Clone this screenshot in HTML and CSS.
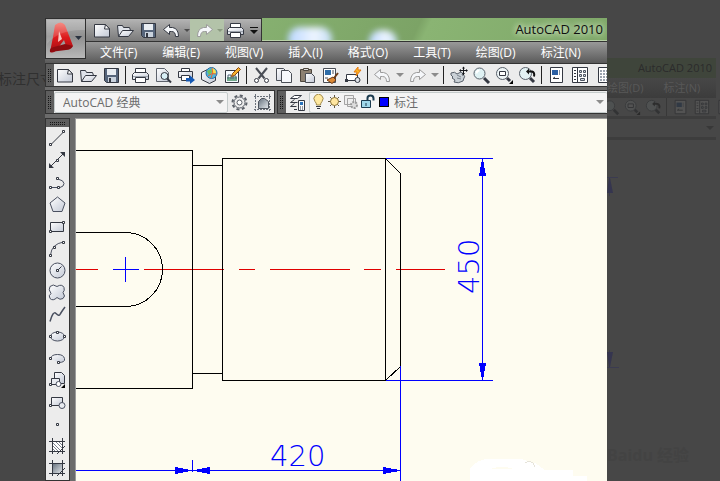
FILE: index.html
```
<!DOCTYPE html>
<html lang="zh-CN">
<head>
    <meta charset="UTF-8">
    <meta name="viewport" content="width=device-width, initial-scale=1.0">
    <title>AutoCAD 2010</title>
    <link rel="stylesheet" href="styles.css">
</head>
<body>
    <!-- icon set -->
    <svg class="defs" width="0" height="0" aria-hidden="true">
        <defs>
            <linearGradient id="paper" x1="0" y1="0" x2="1" y2="1">
                <stop offset="0" stop-color="#ffffff"/>
                <stop offset="1" stop-color="#c3c9d6"/>
            </linearGradient>
            <linearGradient id="steel" x1="0" y1="0" x2="1" y2="1">
                <stop offset="0" stop-color="#65707c"/>
                <stop offset="1" stop-color="#e6eaee"/>
            </linearGradient>
            <linearGradient id="red" x1="0" y1="0" x2="0" y2="1">
                <stop offset="0" stop-color="#f4776c"/>
                <stop offset="0.5" stop-color="#dc1a1c"/>
                <stop offset="1" stop-color="#a30d12"/>
            </linearGradient>
        </defs>
        <symbol id="new" viewBox="0 0 19 19">
            <path d="M1.5 3.5h11l4 4v8.5h-15z" fill="url(#paper)" stroke="#343842"/>
            <path d="M12.5 3.5l-1 4.5h5z" fill="#fff" stroke="#343842"/>
        </symbol>
        <symbol id="open" viewBox="0 0 19 19">
            <path d="M2.5 15.5l-1-11h5l1 2h6l1 3" fill="#dfe3ea" stroke="#343842"/>
            <path d="M2.5 15.5l4-6h11l-5 6z" fill="url(#paper)" stroke="#343842"/>
        </symbol>
        <symbol id="save" viewBox="0 0 19 19">
            <path d="M2.5 2.5h14v14h-12l-2-2z" fill="#56657b" stroke="#343842"/>
            <path d="M5 3h9v6h-9z" fill="#e9edf2"/>
            <path d="M6 11h8v5h-8z" fill="#c9d2dd"/>
            <path d="M7 12h2v4h-2z" fill="#343842"/>
        </symbol>
        <symbol id="print" viewBox="0 0 19 19">
            <path d="M4.500 7.500v-5h10v5" fill="#fff" stroke="#343842"/>
            <path d="M3.500 6.500h12l2 2v5h-16v-5z" fill="url(#paper)" stroke="#343842"/>
            <path d="M4.500 11.500h10v5h-10z" fill="#fff" stroke="#343842"/>
            <path d="M2 10.500h15" stroke="#9aa1ab"/>
        </symbol>
        <symbol id="preview" viewBox="0 0 19 19">
            <path d="M2.500 2.500h8l4 4v9h-12z" fill="url(#paper)" stroke="#5d626c"/>
            <circle cx="10.500" cy="10" r="3.500" fill="#d7eef5" stroke="#343842"/>
            <path d="M13 12.500l4 4" stroke="#343842" stroke-width="2"/>
        </symbol>
        <symbol id="plot" viewBox="0 0 19 19">
            <path d="M4.500 6v-3.500h8v3.500" fill="#fff" stroke="#343842"/>
            <path d="M1.500 5.500h14v6h-14z" fill="url(#paper)" stroke="#343842"/>
            <path d="M4.500 9.500h8v5h-8z" fill="#fff" stroke="#343842"/>
            <path d="M9 12h4v-2.500l5 4.500-5 4v-2.500h-4z" fill="#1559b5"/>
        </symbol>
        <symbol id="globe" viewBox="0 0 19 19">
            <path d="M1.500 6.500l6-3 8 3v8l-6 3-8-4z" fill="url(#paper)" stroke="#343842"/>
            <circle cx="11.500" cy="7" r="5.500" fill="#4bb7e0" stroke="#2f6ca0"/>
            <path d="M12 2q4 1 4 5l-4 1z" fill="#f4e04f"/>
            <path d="M7 5l4-2 1 3-3 3z" fill="#6fc05b"/>
            <path d="M8 10q4-4 8-2M12 2q2 5-1 10" fill="none" stroke="#e8692b"/>
        </symbol>
        <symbol id="sheet" viewBox="0 0 19 19">
            <path d="M2.500 4.500h13v12h-13z" fill="#f7fbff" stroke="#343842"/>
            <path d="M4 11h10v4h-10z" fill="#72a98c"/>
            <path d="M5 13v-4h3v4M10 13v-3h3v3" fill="none" stroke="#4d6277"/>
            <path d="M8.500 10.500l1-3 6-6 2 2-6 6z" fill="#f6b12e" stroke="#8a4a12"/>
        </symbol>
        <symbol id="cut" viewBox="0 0 19 19">
            <path d="M4 2l8.500 10.500M15 2l-8.500 10.500" stroke="#4a4e56" stroke-width="2" fill="none"/>
            <circle cx="4.500" cy="14.500" r="2" fill="#fff" stroke="#343842"/>
            <circle cx="14.500" cy="14.500" r="2" fill="#fff" stroke="#343842"/>
        </symbol>
        <symbol id="copy" viewBox="0 0 19 19">
            <path d="M1.500 2.500h7l3 3v9h-10z" fill="url(#paper)" stroke="#4a4e56"/>
            <path d="M6.500 4.500h7l3 3v9h-10z" fill="#f6f8fb" stroke="#4a4e56"/>
        </symbol>
        <symbol id="paste" viewBox="0 0 19 19">
            <path d="M2.500 3.500h11v12h-11z" fill="#8d8172" stroke="#4d463d"/>
            <path d="M5.500 2.500h5v2h-5z" fill="#ddd" stroke="#4d463d"/>
            <path d="M7.500 7.500h6l3 3v6h-9z" fill="url(#paper)" stroke="#4a4e56"/>
        </symbol>
        <symbol id="match" viewBox="0 0 19 19">
            <path d="M2.500 2.500h12v14h-12z" fill="#fff" stroke="#4a4e56"/>
            <path d="M4 4h6v5h-6z" fill="#2f6da8"/>
            <path d="M11 5h2M11 7h2M4 12h3" stroke="#4a4e56"/>
            <path d="M17 7l-4 5" stroke="#6b3a16" stroke-width="2"/>
            <path d="M6 14l6-3 3 3-4 3.500z" fill="#dd8a35" stroke="#6b3a16"/>
        </symbol>
        <symbol id="block" viewBox="0 0 19 19">
            <path d="M2.500 8.500h11v6h-11z" fill="#fff" stroke="#343842"/>
            <circle cx="13.500" cy="14" r="2.500" fill="#dde1e7" stroke="#343842"/>
            <path d="M1 13h3v3h-3z" fill="#343842"/>
            <path d="M14 1l-4 5h3l-1 4 5-6h-3z" fill="#ffb521" stroke="#e47a10"/>
        </symbol>
        <symbol id="undo" viewBox="0 0 19 19">
            <path d="M1.500 8.500l6-5v3h3q6 1 6 9h-3q0-5-4-5h-2v3z" fill="#f5f7fa" stroke="currentColor"/>
        </symbol>
        <symbol id="redo" viewBox="0 0 19 19">
            <path d="M17.500 8.500l-6-5v3h-3q-6 1-6 9h3q0-5 4-5h2v3z" fill="#f5f7fa" stroke="currentColor"/>
        </symbol>
        <symbol id="pan" viewBox="0 0 19 19">
            <path d="M2 7q4-2 6 1l4-2q3 1 1 3 4 0 2 3l-1 3q-5 3-9 1l1-2-3-2 1-1-2-2z" fill="#c9d0d6" stroke="#59616b"/>
            <path d="M8 9l4 2M8 12l4 1" stroke="#7b848e"/>
            <path d="M14.500 1v8M11 4.500h7" stroke="#16181c"/>
            <path d="M13 2.500l1.500-2 1.500 2zM13 7l1.500 2 1.500-2zM12 3l-2 1.500 2 1.500zM17 3l2 1.500-2 1.500z" fill="#16181c"/>
        </symbol>
        <symbol id="lens" viewBox="0 0 19 19">
            <circle cx="7.500" cy="7.500" r="5.500" fill="#dff1f3" stroke="#59616b"/>
            <path d="M12 12l5 5" stroke="#343842" stroke-width="3"/>
            <path d="M4.500 7.500q0-3 3-3" fill="none" stroke="#fff" stroke-width="2"/>
        </symbol>
        <symbol id="lens-win" viewBox="0 0 19 19">
            <circle cx="7.500" cy="7.500" r="6" fill="#eef5f6" stroke="#59616b"/>
            <path d="M4.500 5.500h6v4h-6z" fill="#fff" stroke="#343842"/>
            <path d="M12 12l3 3" stroke="#343842" stroke-width="3"/>
            <path d="M18 14v4h-4z" fill="#000"/>
        </symbol>
        <symbol id="lens-back" viewBox="0 0 19 19">
            <circle cx="7.500" cy="7.500" r="6" fill="#e3f1f3" stroke="#59616b"/>
            <path d="M12 12l4 4" stroke="#343842" stroke-width="3"/>
            <path d="M10 5.500h4q3 1 2 5" fill="none" stroke="#111" stroke-width="2"/>
            <path d="M8 5.500l3-3v6z" fill="#111"/>
        </symbol>
        <symbol id="props" viewBox="0 0 19 19">
            <path d="M3.500 1.500h12v15h-12z" fill="#fff" stroke="#343842"/>
            <path d="M5 4h6v5h-6z" fill="#2b5fa3"/>
            <path d="M12.500 4v5" stroke="#8a93a0"/>
            <path d="M6 12.500h6M6 12.500l2-1.500" stroke="#343842"/>
        </symbol>
        <symbol id="palette" viewBox="0 0 19 19">
            <path d="M2.500 1.500h15v15h-15z" fill="#fff" stroke="#343842"/>
            <path d="M7.500 2v14" stroke="#343842"/>
            <path d="M4 4.500h2M4 7.500h2M4 10.500h2M4 13.500h2" stroke="#343842"/>
            <path d="M9.500 4.500h2v2h-2zM13.500 4.500h2v2h-2zM9.500 8.500h2v2h-2zM13.500 8.500h2v2h-2zM10.500 12.500h4v2h-4z" fill="#d5dae1" stroke="#4c5461"/>
        </symbol>
        <symbol id="sheets" viewBox="0 0 19 19">
            <path d="M5.500 1.500h12v15h-12z" fill="#fff" stroke="#343842"/>
            <path d="M7 5h10M7 8h10M7 11h10M7 14h10" stroke="#9ba3ae" stroke-width="2" stroke-dasharray="2 1"/>
        </symbol>
        <symbol id="gear" viewBox="0 0 19 19">
            <circle cx="9.500" cy="9.500" r="7" fill="none" stroke="#5b6068" stroke-width="2" stroke-dasharray="3 2.500"/>
            <circle cx="9.500" cy="9.500" r="5.500" fill="#ececec" stroke="#5b6068"/>
            <circle cx="9.500" cy="9.500" r="2.500" fill="#fff" stroke="#5b6068"/>
        </symbol>
        <symbol id="house" viewBox="0 0 19 19">
            <path d="M2.500 1v17M16.500 1v17M1 3.500h17M1 16.500h17" stroke="#6c727b" stroke-dasharray="2 1"/>
            <path d="M5.500 15.500v-7l3-3h3l4 3v7z" fill="url(#steel)" stroke="#4d535c"/>
        </symbol>
        <symbol id="layers" viewBox="0 0 19 19">
            <path d="M2.500 5.500l4-3h7l-4 3zM2.500 9.500l4-3M2.500 9.500h7M2.500 13.500l4-3M2.500 13.500h6M6 16.500h3" fill="#fff" stroke="#343842"/>
            <path d="M10.500 7.500h6v10h-6z" fill="#f5f8fb" stroke="#343842"/>
            <path d="M12 9h3v3h-3z" fill="#2872ba"/>
            <path d="M12 14h1M14 14h1M12 16h1M14 16h1" stroke="#343842"/>
        </symbol>
        <symbol id="bulb" viewBox="0 0 16 16">
            <path d="M5.500 11q0-2-1.500-3.500a4.500 4.500 0 1 1 7 0q-1.500 1.500-1.500 3.500z" fill="#ffe9a0" stroke="#a18a4c"/>
            <path d="M5 12.500h5M6 14.500h3" stroke="#343842"/>
        </symbol>
        <symbol id="sun" viewBox="0 0 16 16">
            <path d="M7.500 1v13M1 7.500h13M3 3l9 9M12 3l-9 9" stroke="#5d5646"/>
            <circle cx="7.500" cy="7.500" r="4" fill="#ffe6a0" stroke="#8a7337"/>
        </symbol>
        <symbol id="freeze" viewBox="0 0 16 16">
            <path d="M1.500 1.500h9v9h-9zM4.500 4.500h8v8h-8z" fill="#eee" stroke="#a3a3a3"/>
            <circle cx="11" cy="11" r="3" fill="#ddd" stroke="#9b9b9b" stroke-width="2" stroke-dasharray="2 1"/>
        </symbol>
        <symbol id="lock" viewBox="0 0 16 16">
            <path d="M8.500 7v-3q0-2.500 3-2.500t3 3v2" fill="none" stroke="#1c3c50" stroke-width="2"/>
            <path d="M2.500 6.500h9v7h-9z" fill="#9fd7ea" stroke="#1c3c50"/>
            <path d="M7 9v3" stroke="#1c3c50"/>
        </symbol>
        <symbol id="t-line" viewBox="0 0 19 19">
            <path d="M3 15.500L15.500 3" stroke="#343842"/>
            <path d="M1.500 14.500h2v2h-2zM14.500 1.500h2v2h-2z" fill="#fff" stroke="#343842"/>
        </symbol>
        <symbol id="t-xline" viewBox="0 0 19 19">
            <path d="M3 15L15 3" stroke="#343842"/>
            <path d="M1 17v-5l5 5zM17 1v5l-5-5z" fill="#343842"/>
            <path d="M8.500 8.500h2v2h-2z" fill="#fff" stroke="#343842"/>
        </symbol>
        <symbol id="t-pline" viewBox="0 0 19 19">
            <path d="M3 14.500h9q4-1 4-4t-6-4.500" fill="none" stroke="#4a5060"/>
            <path d="M1.500 13.500h2v2h-2zM9.500 13.500h2v2h-2zM8.500 4.500h2v2h-2z" fill="#fff" stroke="#343842"/>
        </symbol>
        <symbol id="t-poly" viewBox="0 0 19 19">
            <path d="M9.500 2l7.500 6-3 8.500h-9l-3-8.500z" fill="url(#paper)" stroke="#4a5060"/>
        </symbol>
        <symbol id="t-rect" viewBox="0 0 19 19">
            <path d="M2.500 5.500h13v9h-13z" fill="url(#paper)" stroke="#343842"/>
            <path d="M1.500 13.500h2v2h-2zM14.500 4.500h2v2h-2z" fill="#fff" stroke="#343842"/>
        </symbol>
        <symbol id="t-arc" viewBox="0 0 19 19">
            <path d="M2.500 16q1-11 13-13" fill="none" stroke="#4a5060"/>
            <path d="M1.500 15.500h2v2h-2zM14.500 2.500h2v2h-2zM5.500 7.500h2v2h-2z" fill="#fff" stroke="#343842"/>
        </symbol>
        <symbol id="t-circle" viewBox="0 0 19 19">
            <circle cx="9.500" cy="9.500" r="7.500" fill="url(#paper)" stroke="#4a5060"/>
            <path d="M9.500 9.500l4-4" stroke="#343842"/>
            <path d="M8.500 8.500h2v2h-2z" fill="#fff" stroke="#343842"/>
        </symbol>
        <symbol id="t-cloud" viewBox="0 0 19 19">
            <path d="M9 3.500q5-3 7 1 1 3-1 5 3 4 0 6-3 2-6-1-4 4-7 1-2-3 1-5-3-4-1-7 3-3 7 0z" fill="url(#paper)" stroke="#4a5060"/>
        </symbol>
        <symbol id="t-spline" viewBox="0 0 19 19">
            <path d="M2 16.500q3-11 6-8t4 1 5-7.500" fill="none" stroke="#4a5060" stroke-width="1.500"/>
        </symbol>
        <symbol id="t-ellipse" viewBox="0 0 19 19">
            <ellipse cx="9.500" cy="9.500" rx="7" ry="4.500" fill="url(#paper)" stroke="#4a5060"/>
            <path d="M1.500 8.500h2v2h-2zM15.500 8.500h2v2h-2zM8.500 4.500h2v2h-2z" fill="#fff" stroke="#343842"/>
        </symbol>
        <symbol id="t-earc" viewBox="0 0 19 19">
            <path d="M2.500 9.500q1-4 7-4t7 4-6 4" fill="url(#paper)" stroke="#4a5060"/>
            <path d="M1.500 8.500h2v2h-2zM9.500 12.500h2v2h-2z" fill="#fff" stroke="#343842"/>
        </symbol>
        <symbol id="t-insert" viewBox="0 0 19 19">
            <path d="M6.500 1.500h7l3 3v8h-10z" fill="url(#paper)" stroke="#343842"/>
            <path d="M3.500 7.500h8v6h-8z" fill="#e8ebf0" stroke="#343842"/>
            <circle cx="10.500" cy="13" r="2.500" fill="#fff" stroke="#4a5060"/>
            <path d="M1.500 12.500h2v2h-2z" fill="#fff" stroke="#343842"/>
            <path d="M17 13v4h-4z" fill="#000"/>
        </symbol>
        <symbol id="t-block" viewBox="0 0 19 19">
            <path d="M3.500 4.500h11v8h-11z" fill="url(#paper)" stroke="#343842"/>
            <circle cx="14" cy="12.500" r="3" fill="#e8ebf0" stroke="#4a5060"/>
            <path d="M1.500 11.500h2v2h-2z" fill="#fff" stroke="#343842"/>
        </symbol>
        <symbol id="t-point" viewBox="0 0 19 19">
            <path d="M8.500 8.500h2v2h-2z" fill="#fff" stroke="#343842"/>
        </symbol>
        <symbol id="t-hatch" viewBox="0 0 19 19">
            <path d="M4.500 4.500h10v10h-10z" fill="#fff"/>
            <path d="M4 8l7 7M4 11l4 4M4 5l10 10M7 4l8 8M10 4l5 5" stroke="#7b828e"/>
            <path d="M4.500 1v16M14.500 1v16M1 4.500h16M1 14.500h16M9 17l8-8" stroke="#343842"/>
        </symbol>
        <symbol id="t-grad" viewBox="0 0 19 19">
            <path d="M4.500 4.500h10v10h-10z" fill="url(#steel)"/>
            <path d="M4.500 1v16M14.500 1v16M1 4.500h16M1 14.500h16M9 17l8-8" stroke="#343842"/>
        </symbol>
    </svg>

    <div class="page">
        <div class="page-left">标注尺寸</div>

        <div class="window">
            <header class="header">
                <button class="app-button" aria-label="菜单">
                    <svg width="40" height="40" viewBox="0 0 40 40">
                        <path d="M9 6q6-5 10 0l8 21q-4 2-7 0l-2-6-6 8q-4 6-8 4 3-14 5-27z" fill="url(#red)"/>
                        <path d="M13 12l3 8-4 3z" fill="#f9c7c0"/>
                        <path d="M4 33q-1-4 4-5l11-3 8 2q-2 4-7 4-8 1-16 2z" fill="#8d0c10"/>
                        <path d="M1 25q12-15 38-14v-10h-38z" fill="#fff" opacity="0.15"/>
                        <path d="M29 17h7l-3.500 4z" fill="#2b3340"/>
                    </svg>
                </button>
                <div class="titlebar">
                    <div class="quick">
                        <button class="tool"><svg><use href="#new"/></svg></button>
                        <button class="tool"><svg><use href="#open"/></svg></button>
                        <button class="tool"><svg><use href="#save"/></svg></button>
                        <button class="tool"><svg><use href="#undo"/></svg></button>
                        <span class="caret small"></span>
                        <div class="quick-hot">
                            <button class="tool"><svg><use href="#redo"/></svg></button>
                            <span class="caret small"></span>
                        </div>
                        <button class="tool"><svg><use href="#print"/></svg></button>
                        <button class="more" aria-label="更多"></button>
                    </div>
                    <div class="title">
                        <span class="blob"></span>
                        <span class="blob second"></span>
                        <span class="title-text">AutoCAD 2010</span>
                    </div>
                </div>
                <nav class="menu">
                    <a href="#">文件(F)</a>
                    <a href="#">编辑(E)</a>
                    <a href="#">视图(V)</a>
                    <a href="#">插入(I)</a>
                    <a href="#">格式(O)</a>
                    <a href="#">工具(T)</a>
                    <a href="#">绘图(D)</a>
                    <a href="#">标注(N)</a>
                </nav>
            </header>

            <div class="bar standard">
                <span class="grip"></span>
                <button class="tool"><svg><use href="#new"/></svg></button>
                <button class="tool"><svg><use href="#open"/></svg></button>
                <button class="tool"><svg><use href="#save"/></svg></button>
                <span class="sep"></span>
                <button class="tool"><svg><use href="#print"/></svg></button>
                <button class="tool"><svg><use href="#preview"/></svg></button>
                <button class="tool"><svg><use href="#plot"/></svg></button>
                <button class="tool"><svg><use href="#globe"/></svg></button>
                <button class="tool"><svg><use href="#sheet"/></svg></button>
                <span class="sep"></span>
                <button class="tool"><svg><use href="#cut"/></svg></button>
                <button class="tool"><svg><use href="#copy"/></svg></button>
                <button class="tool"><svg><use href="#paste"/></svg></button>
                <button class="tool"><svg><use href="#match"/></svg></button>
                <button class="tool"><svg><use href="#block"/></svg></button>
                <span class="sep"></span>
                <button class="tool off"><svg><use href="#undo"/></svg></button>
                <span class="caret"></span>
                <button class="tool off"><svg><use href="#redo"/></svg></button>
                <span class="caret"></span>
                <span class="sep"></span>
                <button class="tool"><svg><use href="#pan"/></svg></button>
                <button class="tool"><svg><use href="#lens"/></svg></button>
                <button class="tool"><svg><use href="#lens-win"/></svg></button>
                <button class="tool"><svg><use href="#lens-back"/></svg></button>
                <span class="sep"></span>
                <button class="tool"><svg><use href="#props"/></svg></button>
                <button class="tool"><svg><use href="#palette"/></svg></button>
                <button class="tool"><svg><use href="#sheets"/></svg></button>
            </div>

            <div class="bar-row">
                <div class="bar">
                    <span class="grip"></span>
                    <div class="combo workspace">
                        <select aria-label="工作空间">
                            <option>AutoCAD 经典</option>
                        </select>
                        <span class="caret"></span>
                    </div>
                    <button class="tool"><svg><use href="#gear"/></svg></button>
                    <button class="tool"><svg><use href="#house"/></svg></button>
                </div>
                <div class="bar layer-bar">
                    <span class="grip"></span>
                    <button class="tool"><svg><use href="#layers"/></svg></button>
                    <div class="combo layer">
                        <svg><use href="#bulb"/></svg>
                        <svg><use href="#sun"/></svg>
                        <svg><use href="#freeze"/></svg>
                        <svg><use href="#lock"/></svg>
                        <span class="swatch"></span>
                        <select aria-label="图层">
                            <option>标注</option>
                        </select>
                        <span class="caret"></span>
                    </div>
                </div>
            </div>

            <div class="work">
                <div class="tools">
                    <span class="grip flat"></span>
                    <button class="tool"><svg><use href="#t-line"/></svg></button>
                    <button class="tool"><svg><use href="#t-xline"/></svg></button>
                    <button class="tool"><svg><use href="#t-pline"/></svg></button>
                    <button class="tool"><svg><use href="#t-poly"/></svg></button>
                    <button class="tool"><svg><use href="#t-rect"/></svg></button>
                    <button class="tool"><svg><use href="#t-arc"/></svg></button>
                    <button class="tool"><svg><use href="#t-circle"/></svg></button>
                    <button class="tool"><svg><use href="#t-cloud"/></svg></button>
                    <button class="tool"><svg><use href="#t-spline"/></svg></button>
                    <button class="tool"><svg><use href="#t-ellipse"/></svg></button>
                    <button class="tool"><svg><use href="#t-earc"/></svg></button>
                    <button class="tool"><svg><use href="#t-insert"/></svg></button>
                    <button class="tool"><svg><use href="#t-block"/></svg></button>
                    <button class="tool"><svg><use href="#t-point"/></svg></button>
                    <button class="tool"><svg><use href="#t-hatch"/></svg></button>
                    <button class="tool"><svg><use href="#t-grad"/></svg></button>
                </div>
                <div class="canvas">
                    <svg class="drawing" viewBox="76 119 531 362" width="531" height="362">
                        <!-- white patch in the corner -->
                        <path d="M470 481v-12q6-9 17-10h34l14 4 10 7h28v6h14v5z" fill="#fff"/>
                        <path d="M490 469q12-4 24 0z" fill="#fefcf0"/>
                        <path d="M525 463q4-3 8 0l2 4" fill="none" stroke="#e6e4da"/>

                        <!-- centre line -->
                        <path class="centre" d="M76 269.500h22M144 269.500h80M239 269.500h16M270 269.500h80M364 269.500h17M396 269.500h49"/>

                        <!-- shaft -->
                        <g class="outline">
                            <path d="M76 150.500h116.500v238h-116.500"/>
                            <path d="M192.500 165.500h30M192.500 373.500h30"/>
                            <path d="M385.500 158.500h-163v222h163z"/>
                            <path d="M385.500 158.500l15 15v193l-15 14"/>
                            <path d="M76 232.500h49.500a37 37 0 0 1 0 74h-49.500"/>
                        </g>

                        <!-- dimensions -->
                        <g class="dim">
                            <path d="M125.500 257v25M113 269.500h26"/>
                            <path d="M386 158.500h107M386 380.500h107M482.500 158v222"/>
                            <path d="M400.500 366v115M192.500 460v12M76 470.500h325"/>
                        </g>
                        <g class="arrow">
                            <path d="M482 159h1l3 17h-7z"/>
                            <path d="M482 380h1l3-17h-7z"/>
                            <path d="M190 470v1l-15 3v-7z"/>
                            <path d="M194 470v1l16 3v-7z"/>
                            <path d="M400 470v1l-17 3v-7z"/>
                        </g>
                        <text class="dim-text" x="270" y="466">420</text>
                        <text class="dim-text" transform="translate(479 294) rotate(-90)">450</text>
                    </svg>
                </div>
            </div>
        </div>

        <div class="page-right">
            <div class="ghost-title">AutoCAD 2010</div>
            <div class="ghost-menu"><span>绘图(D)</span><span>标注(N)</span></div>
            <div class="ghost-tools">
                <svg><use href="#lens"/></svg>
                <svg><use href="#lens-win"/></svg>
                <svg><use href="#lens-back"/></svg>
                <span class="sep"></span>
                <svg><use href="#props"/></svg>
                <svg><use href="#palette"/></svg>
                <svg><use href="#sheets"/></svg>
            </div>
            <div class="ghost-combo"><span class="caret"></span></div>
            <svg class="ghost-drawing" width="110" height="200" viewBox="607 170 110 200">
                <path d="M607 177.500h11M607 367.500h12M609.500 178v18M609.500 350v17" stroke="#3b3b50" fill="none"/>
                <path d="M609 178h1l3 15h-6zM609 367h1l3-15h-6z" fill="#35354f"/>
            </svg>
            <div class="ghost-mark">Baidu 经验</div>
        </div>
    </div>
</body>
</html>
```
FILE: styles.css
```
*, *::before, *::after{
    box-sizing: border-box;
}
body{
    margin: 0;
    background-color: #474747;
    font-family: "Open Sans", "Noto Sans CJK SC", sans-serif;
    font-size: 12px;
    overflow: hidden;
}
.defs{
    position: absolute;
}
.page{
    display: grid;
    grid-template-columns: 45px minmax(0, 1fr) 113px;
    height: 100vh;
}
.page-left{
    margin-left: -2px;
    padding-top: 69px;
    font-size: 14px;
    line-height: 20px;
    color: #303030;
    white-space: nowrap;
    overflow: hidden;
}
.window{
    display: flex;
    flex-direction: column;
    min-height: 0;
    margin-top: 18px;
    background-color: #6b6b6b;
    overflow: hidden;
}

/* header */
.header{
    display: grid;
    grid-template-columns: 41px minmax(0, 1fr);
    grid-template-rows: 24px 21px;
}
.app-button{
    grid-area: 1 / 1 / 3 / 2;
    align-self: start;
    z-index: 1;
    height: 41px;
    padding: 0;
    border: 1px solid #2f2f2f;
    background: linear-gradient(#b4b4b4, #8f8f8f 45%, #b9b9b9);
    overflow: hidden;
}
.app-button svg{
    display: block;
}
.titlebar{
    grid-area: 1 / 2;
    display: flex;
    border-bottom: 1px solid #333;
}
.quick{
    display: flex;
    align-items: center;
    padding-left: 5px;
    background: linear-gradient(#b4b4b4, #7a7a7a);
    border: solid #333;
    border-width: 1px 1px 0 0;
}
.quick .tool{
    height: 22px;
}
.quick-hot{
    display: flex;
    align-items: center;
    width: 34px;
    padding-left: 3px;
    background-color: #b3c3a9;
}
.more{
    width: 14px;
    height: 22px;
    padding: 0;
    border: 0;
    background: none;
}
.more::before{
    content: "";
    display: block;
    width: 8px;
    margin: 0 auto;
    border-top: 1px solid #111;
}
.more::after{
    content: "";
    display: block;
    width: 8px;
    margin: 2px auto 0;
    border: 4px solid transparent;
    border-top-color: #111;
    border-bottom: 0;
}
.title{
    position: relative;
    flex: 1;
    padding-right: 4px;
    background: linear-gradient(115deg, #86b070, #7ca366 45%, #8ab473 48%, #7fa869);
    border-bottom: 1px solid #b7d1a6;
    line-height: 22px;
    text-align: right;
    overflow: hidden;
}
.blob{
    position: absolute;
    left: 26px;
    top: 9px;
    width: 44px;
    height: 24px;
    border-radius: 12px;
    background: linear-gradient(90deg, #b9d6ff, #eef5ff 60%, #c2dcf4);
    filter: blur(3px);
}
.blob.second{
    left: 107px;
    top: 12px;
    width: 28px;
}
.title-text{
    position: relative;
    font-size: 13px;
    color: #101010;
    text-shadow: 0 0 6px #dcebd2, 0 0 6px #dcebd2;
}
.menu{
    grid-area: 2 / 1 / 3 / 3;
    display: flex;
    gap: 25px;
    padding-left: 55px;
    background: linear-gradient(#999, #5a5a5a);
}
.menu a{
    color: #fff;
    line-height: 21px;
    text-decoration: none;
    white-space: nowrap;
}

/* toolbars */
.bar{
    display: flex;
    align-items: center;
    height: 24px;
    border: 1px solid #333;
    background-color: #ececec;
}
.standard{
    flex: none;
    border-right: 0;
    overflow: hidden;
}
.bar-row{
    display: flex;
    flex: none;
    gap: 2px;
    margin-top: 3px;
}
.layer-bar{
    flex: 1;
    min-width: 0;
    border-right: 0;
}
.grip{
    flex: none;
    width: 8px;
    height: 22px;
    background:
        repeating-linear-gradient(#5e5e5e 0 1px, transparent 1px 2px),
        repeating-linear-gradient(90deg, #161616 0 1px, #5e5e5e 1px 2px);
    border: solid #5e5e5e;
    border-width: 4px 2px;
}
.grip.flat{
    width: 23px;
    height: 8px;
    border-width: 2px 4px;
}
.tool{
    flex: none;
    display: flex;
    align-items: center;
    justify-content: center;
    width: 23px;
    height: 22px;
    padding: 0;
    border: 0;
    background: none;
    color: #343842;
}
.tool svg{
    width: 19px;
    height: 19px;
}
.tool.off, .quick-hot .tool{
    color: #9b9b9b;
}
.sep{
    flex: none;
    width: 6px;
    height: 18px;
    border: solid transparent;
    border-width: 0 3px 0 2px;
    background-color: #222;
    background-clip: padding-box;
}
.caret{
    flex: none;
    width: 12px;
}
.caret::before{
    content: "";
    display: block;
    width: 8px;
    margin: 0 auto;
    border: 4px solid transparent;
    border-top-color: #8c8c8c;
    border-bottom: 0;
}
.caret.small{
    width: 7px;
}
.caret.small::before{
    width: 6px;
    border-width: 3px 3px 0;
    border-top-color: #4c4c4c;
}
.quick-hot .caret.small::before{
    border-top-color: #8a9a80;
}
.combo{
    position: relative;
    display: flex;
    align-items: center;
    height: 21px;
    border: 1px solid #c4cbcb;
    border-radius: 2px;
    background-color: #f4f4f4;
}
.combo select{
    flex: 1;
    min-width: 0;
    height: 19px;
    padding: 0 14px 0 8px;
    border: 0;
    background: none;
    appearance: none;
    color: #6b6b6b;
    font-family: inherit;
    font-size: 12px;
}
.combo .caret{
    position: absolute;
    right: 1px;
    pointer-events: none;
}
.combo svg{
    flex: none;
    width: 16px;
    height: 16px;
}
.workspace{
    width: 174px;
}
.layer{
    flex: 1;
    min-width: 0;
    padding-left: 1px;
    border-right: 0;
}
.layer select{
    padding-left: 5px;
}
.swatch{
    flex: none;
    width: 10px;
    height: 10px;
    margin-left: 4px;
    border: 1px solid #000;
    background-color: #00f;
}

/* drawing area */
.work{
    display: flex;
    flex: 1;
    min-height: 0;
    padding-top: 4px;
}
.tools{
    display: flex;
    flex-direction: column;
    width: 25px;
    border: 1px solid #333;
    background-color: #ececec;
    overflow: hidden;
}
.canvas{
    flex: 1;
    min-width: 0;
    margin-left: 5px;
    border: solid #9c9c9c;
    border-width: 1px 0 0 1px;
    background-color: #fefcf0;
    overflow: hidden;
}
.drawing{
    display: block;
    shape-rendering: crispEdges;
}
.outline{
    fill: none;
    stroke: #000;
}
.centre{
    stroke: #e00000;
}
.dim{
    fill: none;
    stroke: #00f;
}
.arrow{
    fill: #00f;
}
.dim-text{
    fill: #00f;
    font-family: "DejaVu Sans Light", "DejaVu Sans", sans-serif;
    font-size: 29px;
    font-weight: 200;
}

/* dimmed copy behind the window */
.page-right{
    display: flex;
    flex-direction: column;
    padding: 58px 4px 0 0;
    overflow: hidden;
}
.ghost-title{
    height: 20px;
    padding-right: 4px;
    background-color: #3f453b;
    color: #2b2b2b;
    font-size: 11px;
    line-height: 20px;
    text-align: right;
}
.ghost-menu{
    display: flex;
    gap: 20px;
    height: 20px;
    background: linear-gradient(#474747, #3c3c3c);
    color: #585858;
    font-size: 11px;
    line-height: 20px;
}
.ghost-tools{
    display: flex;
    align-items: center;
    height: 18px;
    margin-left: -6px;
    opacity: 0.4;
}
.ghost-tools svg{
    flex: none;
    width: 17px;
    height: 17px;
    margin: 0 2px;
    filter: brightness(0.4);
}
.ghost-combo{
    display: flex;
    align-items: center;
    justify-content: flex-end;
    height: 24px;
    border: solid #393939;
    border-width: 3px 0;
    opacity: 0.7;
}
.ghost-combo .caret::before{
    border-top-color: #333;
}
.ghost-drawing{
    flex: none;
    margin-top: 30px;
}
.ghost-mark{
    margin-top: 70px;
    color: #434343;
    font-size: 16px;
    font-weight: bold;
    line-height: 30px;
}
```
